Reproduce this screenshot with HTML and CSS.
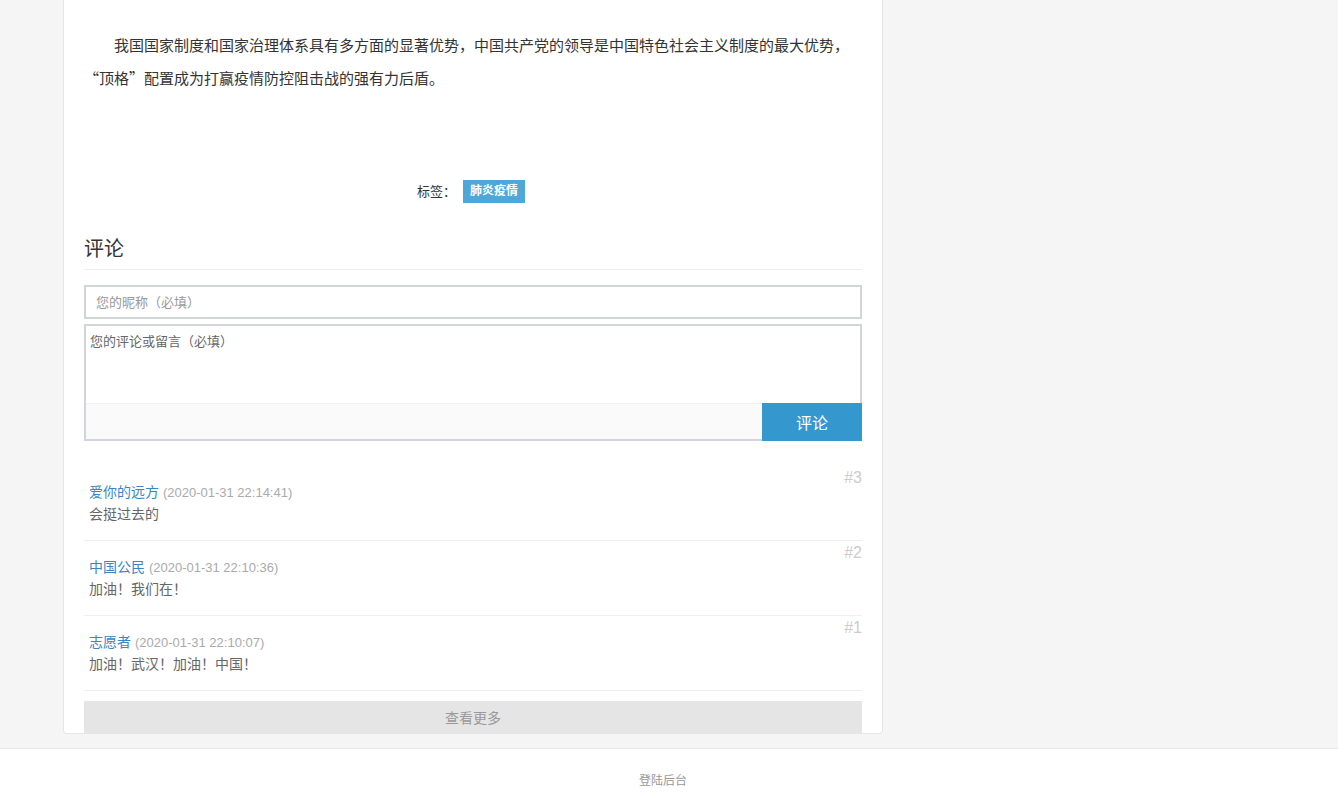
FILE: index.html
```html
<!DOCTYPE html>
<html lang="zh-CN">
<head>
<meta charset="utf-8">
<title>文章详情</title>
<link rel="stylesheet" href="styles.css">
</head>
<body>
<main class="page">
  <article class="card">
    <div class="article-body">
      <p class="para">我国国家制度和国家治理体系具有多方面的显著优势，中国共产党的领导是中国特色社会主义制度的最大优势，“顶格”配置成为打赢疫情防控阻击战的强有力后盾。</p>
    </div>
    <div class="tags">
      <span class="tags-label">标签：</span><a class="tag">肺炎疫情</a>
    </div>

    <section class="comments">
      <h3 class="comments-title">评论</h3>
      <form class="comment-form">
        <input class="nick" type="text" placeholder="您的昵称（必填）">
        <div class="editor">
          <textarea class="editor-text" placeholder="您的评论或留言（必填）"></textarea>
          <div class="editor-bar"></div>
          <button class="submit" type="button">评论</button>
        </div>
      </form>

      <ul class="comment-list">
        <li class="comment">
          <div class="comment-body">
            <div class="comment-meta"><a class="author">爱你的远方</a> <span class="time">(2020-01-31 22:14:41)</span></div>
            <div class="comment-text">会挺过去的</div>
          </div>
          <span class="floor">#3</span>
        </li>
        <li class="comment">
          <div class="comment-body">
            <div class="comment-meta"><a class="author">中国公民</a> <span class="time">(2020-01-31 22:10:36)</span></div>
            <div class="comment-text">加油！我们在！</div>
          </div>
          <span class="floor">#2</span>
        </li>
        <li class="comment">
          <div class="comment-body">
            <div class="comment-meta"><a class="author">志愿者</a> <span class="time">(2020-01-31 22:10:07)</span></div>
            <div class="comment-text">加油！武汉！加油！中国！</div>
          </div>
          <span class="floor">#1</span>
        </li>
      </ul>
      <button class="more" type="button">查看更多</button>
    </section>
  </article>
</main>
<footer class="footer">
  <a class="admin">登陆后台</a>
</footer>
</body>
</html>
```

FILE: styles.css
```css
* { box-sizing: border-box; }

html, body {
  margin: 0;
  padding: 0;
}

body {
  background: #f5f5f5;
  font-family: "Liberation Sans", "Noto Sans CJK SC", sans-serif;
  color: #333;
  font-size: 14px;
}

.page {
  padding-left: 63px;
}

.card {
  width: 820px;
  background: #fff;
  border: 1px solid #e6e6e6;
  border-top: none;
  border-radius: 0 0 4px 4px;
  padding: 0 20px;
  overflow: hidden;
}

.article-body {
  padding-top: 28px;
}

.para {
  margin: 0;
  font-family: "Noto Sans CJK SC", "Liberation Sans", sans-serif;
  font-size: 15px;
  line-height: 33px;
  text-indent: 2em;
  color: #333;
}

.tags {
  margin-top: 86px;
  text-align: center;
  font-size: 13px;
  line-height: 23px;
  height: 23px;
  color: #333;
  padding-right: 4px;
}

.tags-label {
  margin-right: 7px;
}

.tag {
  display: inline-block;
  vertical-align: top;
  background: #4fa7d8;
  color: #fff;
  font-size: 12px;
  font-weight: bold;
  padding: 0 7px;
  height: 23px;
  line-height: 23px;
}

.comments-title {
  margin: 32px 0 0;
  font-size: 20px;
  font-weight: normal;
  line-height: 28px;
  padding-bottom: 6px;
  border-bottom: 1px solid #eee;
  color: #333;
}

.comment-form {
  margin-top: 15px;
}

.nick {
  display: block;
  width: 100%;
  height: 34px;
  border: 2px solid #d1d5db;
  padding: 0 10px;
  font-family: inherit;
  font-size: 13px;
  color: #333;
  outline: none;
}

.nick::placeholder {
  color: #999;
}

.editor {
  position: relative;
  margin-top: 5px;
  height: 117px;
  border: 2px solid #d1d5db;
  display: flex;
  flex-direction: column;
}

.editor-text {
  display: block;
  width: 100%;
  height: 77px;
  flex: none;
  border: none;
  resize: none;
  padding: 6px 4px;
  font-family: inherit;
  font-size: 13px;
  line-height: 20px;
  color: #333;
  outline: none;
}

.editor-text::placeholder {
  color: #666;
}

.editor-bar {
  flex: 1;
  background: #fafafa;
  border-top: 1px solid #f0f0f0;
}

.submit {
  position: absolute;
  right: -2px;
  bottom: -2px;
  width: 100px;
  height: 38px;
  border: none;
  background: #3498cf;
  color: #fff;
  font-family: inherit;
  font-size: 16px;
  cursor: pointer;
}

.comment-list {
  list-style: none;
  margin: 25px 0 0;
  padding: 0;
}

.comment {
  display: flex;
  justify-content: space-between;
  align-items: flex-start;
  height: 75px;
  border-bottom: 1px solid #eee;
}

.comment-body {
  padding: 15px 0 0 5px;
}

.comment-meta {
  line-height: 22px;
  height: 22px;
}

.author {
  color: #3a86c4;
  font-size: 14px;
}

.time {
  color: #aaa;
  font-size: 13px;
}

.comment-text {
  color: #666;
  font-size: 14px;
  line-height: 22px;
}

.floor {
  color: #ccc;
  font-size: 16px;
  line-height: 22px;
  padding-top: 1px;
}

.more {
  display: block;
  width: 100%;
  margin-top: 10px;
  height: 32px;
  border: none;
  background: #e5e5e5;
  color: #999;
  font-family: inherit;
  font-size: 14px;
  cursor: pointer;
}

.footer {
  margin-top: 14px;
  background: #fff;
  border-top: 1px solid #e6e6e6;
  height: 60px;
  padding-top: 23px;
  padding-right: 12px;
  text-align: center;
  font-size: 12px;
  line-height: 18px;
}

.admin {
  color: #999;
}
```
